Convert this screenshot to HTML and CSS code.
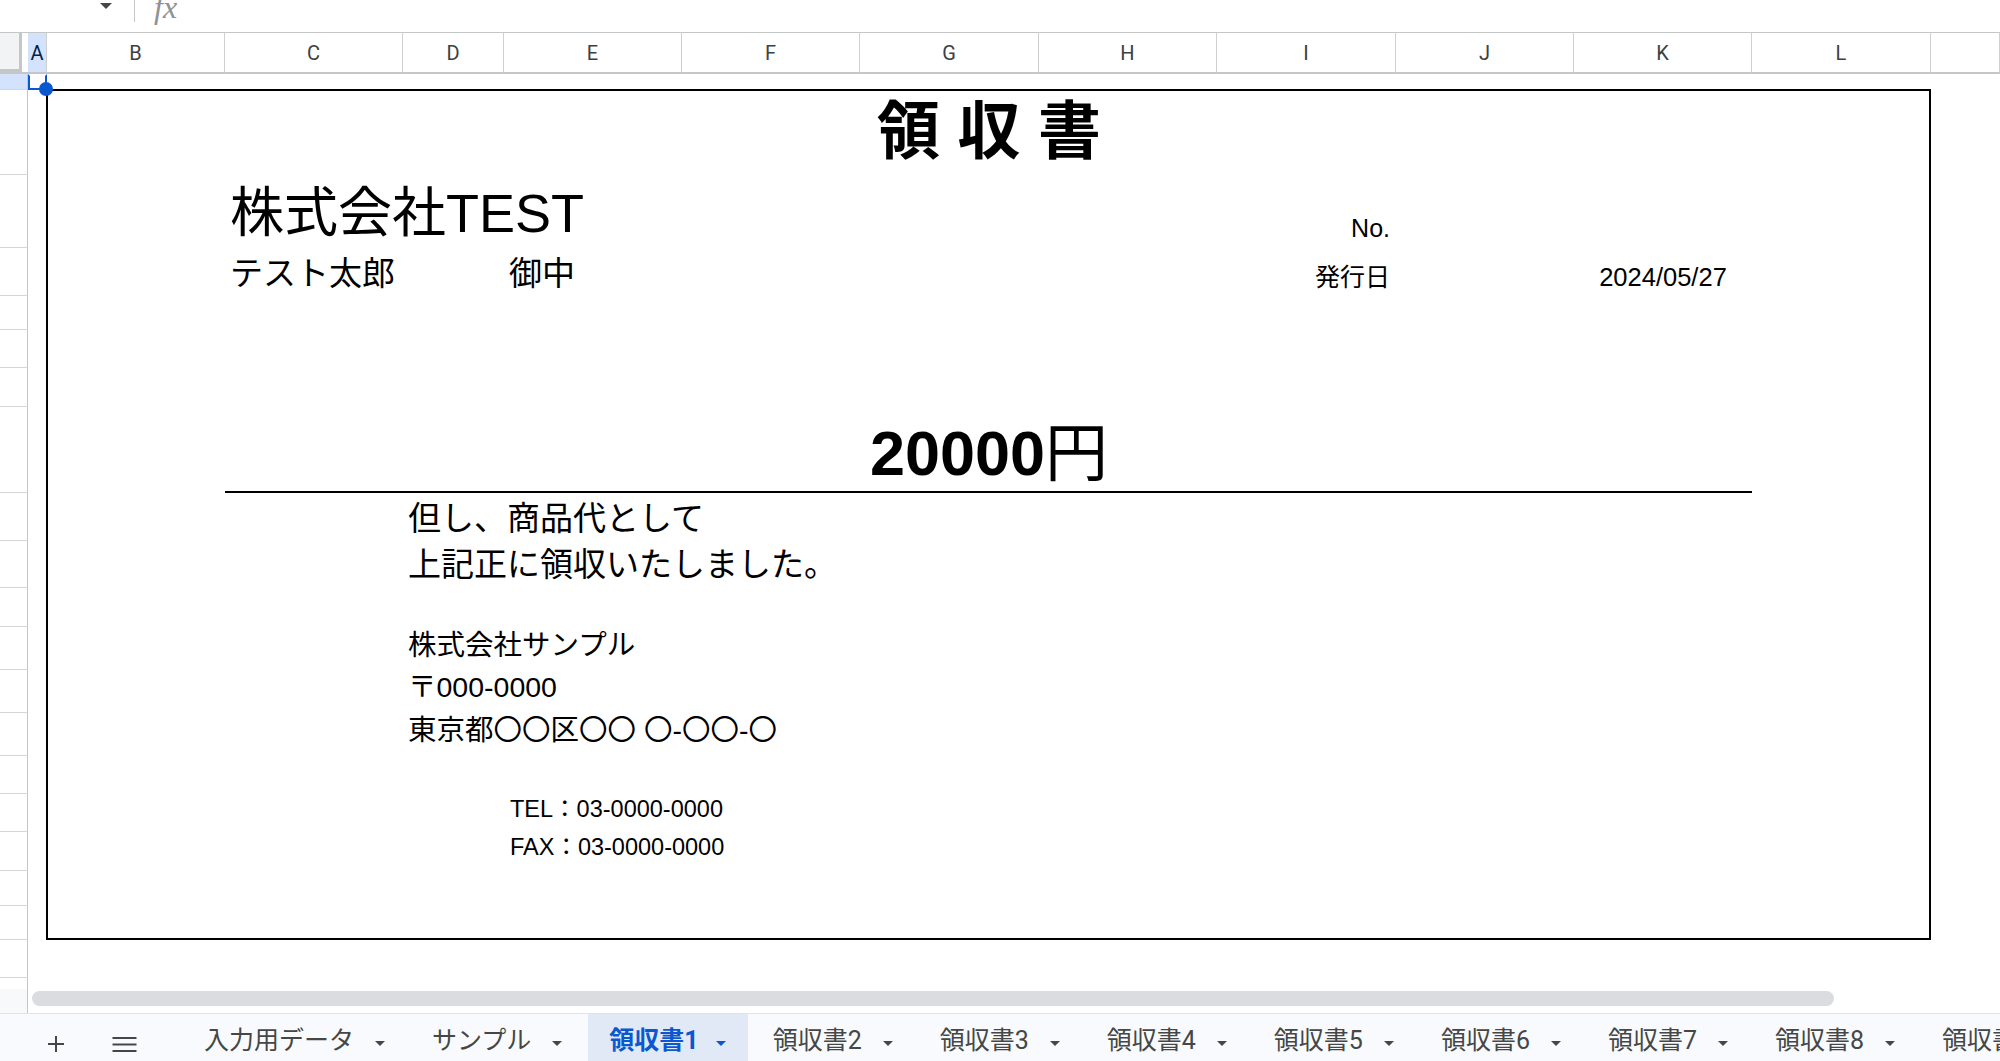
FILE: index.html
```html
<!DOCTYPE html>
<html lang="ja">
<head>
<meta charset="utf-8">
<title>領収書1</title>
<link rel="stylesheet" href="styles.css">
</head>
<body>
<div class="fbar">
  <svg class="nb-arrow" viewBox="0 0 12 6"><path d="M0 0h12L6 6z"/></svg>
  <span class="fsep"></span>
  <span class="fx">fx</span>
</div>

<div class="sheet">
  <div class="corner"><div class="corner-in"></div></div>
  <div class="ch sel">A</div>
  <div class="ch">B</div>
  <div class="ch">C</div>
  <div class="ch">D</div>
  <div class="ch">E</div>
  <div class="ch">F</div>
  <div class="ch">G</div>
  <div class="ch">H</div>
  <div class="ch">I</div>
  <div class="ch">J</div>
  <div class="ch">K</div>
  <div class="ch">L</div>
  <div class="ch"></div>

  <div class="rh sel"></div>
  <div class="rh"></div>
  <div class="rh"></div>
  <div class="rh"></div>
  <div class="rh"></div>
  <div class="rh"></div>
  <div class="rh"></div>
  <div class="rh"></div>
  <div class="rh"></div>
  <div class="rh"></div>
  <div class="rh"></div>
  <div class="rh"></div>
  <div class="rh"></div>
  <div class="rh"></div>
  <div class="rh"></div>
  <div class="rh"></div>
  <div class="rh"></div>
  <div class="rh"></div>
  <div class="rh"></div>
  <div class="rh"></div>
  <div class="rh"></div>

  <div class="box"></div>
  <div class="rule"></div>

  <div class="cell title">領 収 書</div>
  <div class="cell corp">株式会社TEST</div>
  <div class="cell no">No.</div>
  <div class="cell person">テスト太郎</div>
  <div class="cell onchu">御中</div>
  <div class="cell issue">発行日</div>
  <div class="cell date">2024/05/27</div>
  <div class="cell amount">20000<span class="yen">円</span></div>
  <div class="cell memo1">但し、商品代として</div>
  <div class="cell memo2">上記正に領収いたしました。</div>
  <div class="cell co1">株式会社サンプル</div>
  <div class="cell co2">〒000-0000</div>
  <div class="cell co3">東京都〇〇区〇〇 〇-〇〇-〇</div>
  <div class="cell tel">TEL：03-0000-0000</div>
  <div class="cell fax">FAX：03-0000-0000</div>

  <div class="selection"><span class="handle"></span></div>
</div>

<div class="hscroll">
  <div class="hs-left"></div>
  <div class="thumb"></div>
</div>

<div class="tabbar">
  <span class="tb-icon plus"><svg viewBox="0 0 16 16"><path d="M7 0h2v7h7v2H9v7H7V9H0V7h7z"/></svg></span>
  <span class="tb-icon menu"><svg viewBox="0 0 24 15"><path d="M0 0h24v2H0zM0 6.5h24v2H0zM0 13h24v2H0z"/></svg></span>
  <div class="tab"><span>入力用データ</span><svg class="caret" viewBox="0 0 10 5"><path d="M0 0h10L5 5z"/></svg></div>
  <div class="tab"><span>サンプル</span><svg class="caret" viewBox="0 0 10 5"><path d="M0 0h10L5 5z"/></svg></div>
  <div class="tab active"><span>領収書1</span><svg class="caret" viewBox="0 0 10 5"><path d="M0 0h10L5 5z"/></svg></div>
  <div class="tab"><span>領収書2</span><svg class="caret" viewBox="0 0 10 5"><path d="M0 0h10L5 5z"/></svg></div>
  <div class="tab"><span>領収書3</span><svg class="caret" viewBox="0 0 10 5"><path d="M0 0h10L5 5z"/></svg></div>
  <div class="tab"><span>領収書4</span><svg class="caret" viewBox="0 0 10 5"><path d="M0 0h10L5 5z"/></svg></div>
  <div class="tab"><span>領収書5</span><svg class="caret" viewBox="0 0 10 5"><path d="M0 0h10L5 5z"/></svg></div>
  <div class="tab"><span>領収書6</span><svg class="caret" viewBox="0 0 10 5"><path d="M0 0h10L5 5z"/></svg></div>
  <div class="tab"><span>領収書7</span><svg class="caret" viewBox="0 0 10 5"><path d="M0 0h10L5 5z"/></svg></div>
  <div class="tab"><span>領収書8</span><svg class="caret" viewBox="0 0 10 5"><path d="M0 0h10L5 5z"/></svg></div>
  <div class="tab"><span>領収書9</span><svg class="caret" viewBox="0 0 10 5"><path d="M0 0h10L5 5z"/></svg></div>
</div>
</body>
</html>
```

FILE: styles.css
```css
* { box-sizing: border-box; }
html, body { margin: 0; padding: 0; }
body {
  width: 2000px;
  height: 1061px;
  overflow: hidden;
  background: #fff;
  font-family: Roboto, "Noto Sans CJK JP", sans-serif;
  color: #1f1f1f;
}

/* formula bar (cut at the top) */
.fbar {
  height: 32px;
  display: flex;
  align-items: flex-start;
  overflow: hidden;
  background: #fff;
}
.nb-arrow { display: block; width: 12px; height: 6px; margin: 3px 0 0 100px; fill: #444746; }
.fsep { width: 1px; height: 22px; margin-left: 22px; background: #c4c7c5; }
.fx {
  margin: -9px 0 0 19px;
  font: italic 32px/1 "Liberation Serif", serif;
  color: #8e9196;
}

/* sheet grid */
.sheet {
  height: 957px;
  display: grid;
  grid-template-columns: 28px 19px 178px 178px 101px 178px 178px 179px 178px 179px 178px 178px 179px 69px;
  grid-template-rows: 42px 16px 85px 73px 48px 34px 38px 39px 86px 48px 47px 39px 43px 43px 43px 38px 38px 39px 35px 34px 38px 38px;
  overflow: hidden;
}
.corner {
  grid-area: 1 / 1;
  padding-right: 6px;
  border-top: 1px solid #c4c7c5;
  border-bottom: 2px solid #c4c7c5;
  background: #fff;
}
.corner-in {
  height: 100%;
  background: #f1f3f4;
  border-right: 3px solid #c4c7c5;
  border-bottom: 3px solid #c4c7c5;
}
.ch {
  grid-row: 1;
  display: flex;
  align-items: center;
  justify-content: center;
  border-top: 1px solid #c4c7c5;
  border-bottom: 2px solid #c4c7c5;
  border-right: 1px solid #d0d0d0;
  font-size: 20px;
  color: #3c4043;
  background: #fff;
}
.ch.sel { background: #d3e3fd; color: #041e49; }
.rh {
  grid-column: 1;
  border-right: 1px solid #c4c7c5;
  border-bottom: 1px solid #d5d5d5;
  background: #fff;
}
.rh.sel { background: #d3e3fd; }

.box {
  grid-column: 3 / 14;
  grid-row: 3 / 21;
  margin: -1px 0 0 -1px;
  border: 2px solid #000;
}
.rule {
  grid-column: 4 / 13;
  grid-row: 9;
  border-bottom: 2px solid #000;
}

.selection {
  grid-area: 2 / 2;
  position: relative;
  z-index: 2;
  border: 2px solid #0b57d0;
  border-top-color: transparent;
}
.handle {
  position: absolute;
  right: -8px;
  bottom: -8px;
  width: 14px;
  height: 14px;
  border-radius: 50%;
  background: #0b57d0;
}

/* cell contents */
.cell {
  display: flex;
  align-items: flex-end;
  white-space: nowrap;
  font-family: "Liberation Sans", "Noto Sans CJK JP", sans-serif;
  line-height: 1;
  color: #000;
}
.title { grid-column: 3 / 14; grid-row: 3; justify-content: center; font-size: 63px; font-weight: 700; padding-bottom: 12px; }
.corp { grid-column: 4 / 8; grid-row: 4; font-size: 54px; padding: 0 0 8px 5px; }
.no { grid-column: 10; grid-row: 4; justify-content: flex-end; font-size: 25px; padding: 0 6px 7px 0; }
.person { grid-column: 4 / 6; grid-row: 5; font-size: 33px; padding: 0 0 6px 5px; }
.onchu { grid-column: 6 / 8; grid-row: 5; font-size: 33px; padding: 0 0 6px 5px; }
.issue { grid-column: 10; grid-row: 5; justify-content: flex-end; font-size: 25px; padding: 0 6px 6px 0; }
.date { grid-column: 12; grid-row: 5; justify-content: center; font-size: 25.5px; padding-bottom: 6px; }
.amount { grid-column: 3 / 14; grid-row: 9; justify-content: center; font-size: 63px; font-weight: 700; padding-bottom: 8px; }
.yen { font-weight: 400; }
.memo1 { grid-column: 5 / 10; grid-row: 10; font-size: 33px; padding: 0 0 6px 5px; }
.memo2 { grid-column: 5 / 10; grid-row: 11; font-size: 33px; padding: 0 0 7px 5px; }
.co1 { grid-column: 5 / 10; grid-row: 13; font-size: 28.5px; padding: 0 0 11px 5px; }
.co2 { grid-column: 5 / 10; grid-row: 14; font-size: 28.5px; padding: 0 0 12px 5px; }
.co3 { grid-column: 5 / 10; grid-row: 15; font-size: 28.5px; padding: 0 0 12px 5px; }
.tel { grid-column: 6 / 10; grid-row: 17; font-size: 23.5px; padding: 0 0 11px 6px; }
.fax { grid-column: 6 / 10; grid-row: 18; font-size: 23.5px; padding: 0 0 12px 6px; }

/* horizontal scrollbar */
.hscroll {
  height: 24px;
  display: flex;
  align-items: flex-start;
  background: #fff;
}
.hs-left { width: 28px; height: 100%; border-right: 1px solid #c4c7c5; background: #f8f9fa; }
.thumb { width: 1802px; height: 15px; margin: 2px 0 0 4px; border-radius: 8px; background: #dadce0; }

/* sheet tabs */
.tabbar {
  height: 48px;
  display: flex;
  align-items: center;
  padding-left: 48px;
  border-top: 1px solid #e3e3e3;
  background: #f8fafd;
  overflow: hidden;
  white-space: nowrap;
}
.tb-icon { display: flex; margin-top: 13px; fill: #444746; }
.plus svg { width: 16px; height: 16px; }
.menu { margin-left: 48px; }
.menu svg { width: 25px; height: 15px; }
.tab {
  flex: none;
  height: 100%;
  display: flex;
  align-items: center;
  padding: 0 22px 0 21px;
  margin-right: 4px;
  font-size: 25px;
  line-height: 1;
  color: #444746;
}
.tab span { margin-top: 6px; }
.tab:first-of-type { margin-left: 46px; }
.tab .caret { width: 10px; height: 5px; margin: 12px 0 0 21px; fill: #444746; }
.tab.active { background: #e1e9f7; color: #0b57d0; font-weight: 700; }
.tab.active .caret { margin-left: 17px; fill: #0b57d0; }
```
